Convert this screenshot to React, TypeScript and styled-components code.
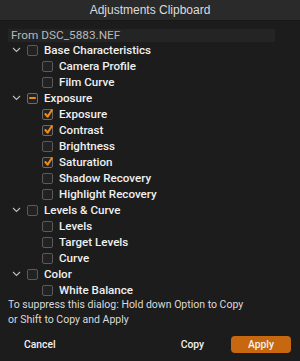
import { createGlobalStyle } from "styled-components";
import styled from "styled-components";

type CheckState = "off" | "on" | "mixed";

type Item = { label: string; state: CheckState };
type Group = { label: string; state: CheckState; items: Item[] };

const groups: Group[] = [
  {
    label: "Base Characteristics",
    state: "off",
    items: [
      { label: "Camera Profile", state: "off" },
      { label: "Film Curve", state: "off" },
    ],
  },
  {
    label: "Exposure",
    state: "mixed",
    items: [
      { label: "Exposure", state: "on" },
      { label: "Contrast", state: "on" },
      { label: "Brightness", state: "off" },
      { label: "Saturation", state: "on" },
      { label: "Shadow Recovery", state: "off" },
      { label: "Highlight Recovery", state: "off" },
    ],
  },
  {
    label: "Levels & Curve",
    state: "off",
    items: [
      { label: "Levels", state: "off" },
      { label: "Target Levels", state: "off" },
      { label: "Curve", state: "off" },
    ],
  },
  {
    label: "Color",
    state: "off",
    items: [{ label: "White Balance", state: "off" }],
  },
];

const GlobalStyle = createGlobalStyle`
  html, body {
    margin: 0;
    padding: 0;
    background: #1c1c1c;
  }
  body {
    font-family: Roboto, "Liberation Sans", Arial, sans-serif;
    -webkit-font-smoothing: antialiased;
  }
`;

const Chevron = () => (
  <svg width="9" height="6" viewBox="0 0 9 6">
    <path d="M1 1 L4.5 4.5 L8 1" fill="none" stroke="#bdbdbd" strokeWidth="1.1" />
  </svg>
);

const Box = ({ state }: { state: CheckState }) => (
  <CheckBox $active={state !== "off"}>
    {state === "on" && (
      <svg width="12" height="12" viewBox="0 0 12 12">
        <path
          d="M2.4 6 L4.6 8.6 L9 2"
          fill="none"
          stroke="#f38a18"
          strokeWidth="2.1"
          strokeLinecap="round"
          strokeLinejoin="round"
        />
      </svg>
    )}
    {state === "mixed" && <Dash />}
  </CheckBox>
);

export default function App() {
  return (
    <Dialog>
      <GlobalStyle />
      <TitleBar>Adjustments Clipboard</TitleBar>
      <Body>
        <ListHeader>From DSC_5883.NEF</ListHeader>
        <List>
          {groups.map((g) => (
            <div key={g.label}>
              <Row $child={false}>
                <Toggle>
                  <Chevron />
                </Toggle>
                <Box state={g.state} />
                <Label>{g.label}</Label>
              </Row>
              {g.items.map((it) => (
                <Row key={it.label} $child>
                  <Box state={it.state} />
                  <Label>{it.label}</Label>
                </Row>
              ))}
            </div>
          ))}
        </List>
        <Hint>
          To suppress this dialog: Hold down Option to Copy
          <br />
          or Shift to Copy and Apply
        </Hint>
        <Buttons>
          <Button>Cancel</Button>
          <Spacer />
          <Button>Copy</Button>
          <Button $primary>Apply</Button>
        </Buttons>
      </Body>
    </Dialog>
  );
}

const Dialog = styled.div`
  width: 300px;
  height: 361px;
  background: #1c1c1c;
  display: flex;
  flex-direction: column;
  overflow: hidden;
  color: #e6e6e6;
`;

const TitleBar = styled.div`
  height: 20px;
  background: #2a2a2a;
  border-bottom: 1px solid #171717;
  display: flex;
  align-items: center;
  justify-content: center;
  font-family: "Liberation Sans", Arial, sans-serif;
  font-size: 12px;
  color: #dcdcdc;
`;

const Body = styled.div`
  flex: 1;
  display: flex;
  flex-direction: column;
  padding: 8px 8px 0 8px;
  min-height: 0;
`;

const ListHeader = styled.div`
  width: 267px;
  height: 13px;
  background: #242424;
  color: #b8b8b8;
  font-size: 11.8px;
  line-height: 13px;
  padding-left: 3px;
  box-sizing: border-box;
`;

const List = styled.div`
  height: 255px;
  overflow: hidden;
`;

const Row = styled.div<{ $child: boolean }>`
  height: 16px;
  display: flex;
  align-items: center;
  padding-left: ${(p) => (p.$child ? "34px" : "4px")};
`;

const Toggle = styled.span`
  width: 15px;
  display: flex;
  align-items: center;
`;

const CheckBox = styled.span<{ $active: boolean }>`
  width: 11px;
  height: 11px;
  box-sizing: border-box;
  border: 1px solid ${(p) => (p.$active ? "#6a6a6a" : "#5a5a5a")};
  border-radius: 2px;
  background: #222;
  display: flex;
  align-items: center;
  justify-content: center;
  position: relative;
  flex-shrink: 0;
  svg {
    position: absolute;
    left: 0;
    top: -2px;
  }
`;

const Dash = styled.span`
  width: 7px;
  height: 2px;
  background: #f38a18;
  border-radius: 1px;
`;

const Label = styled.span`
  margin-left: 6px;
  font-size: 11.6px;
  font-weight: 500;
  color: #f0f0f0;
  white-space: nowrap;
`;

const Hint = styled.div`
  font-size: 10.5px;
  line-height: 15px;
  color: #dadada;
`;

const Buttons = styled.div`
  display: flex;
  align-items: center;
  margin-top: 9px;
  padding-right: 1px;
`;

const Spacer = styled.div`
  flex: 1;
`;

const Button = styled.button<{ $primary?: boolean }>`
  font-family: Roboto, "Liberation Sans", Arial, sans-serif;
  font-size: 10.3px;
  font-weight: 500;
  color: #f2f2f2;
  border: none;
  border-radius: 4px;
  height: 17px;
  background: ${(p) => (p.$primary ? "#c7670f" : "transparent")};
  width: ${(p) => (p.$primary ? "60px" : "auto")};
  padding: ${(p) => (p.$primary ? "0" : "0 16px")};
  margin-left: ${(p) => (p.$primary ? "11px" : "0")};
`;
